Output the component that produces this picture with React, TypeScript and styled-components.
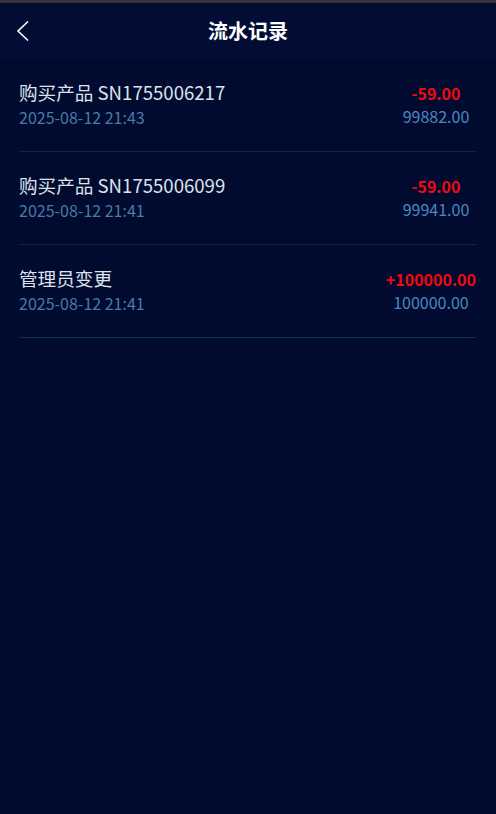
import React from "react";
import styled, { createGlobalStyle } from "styled-components";

const Global = createGlobalStyle`
  html, body { margin: 0; padding: 0; background: #000b2f; }
  body { font-family: "Noto Sans CJK SC", "Noto Sans", sans-serif; }
`;

const Page = styled.div`
  min-height: 814px;
  background: #000b2f;
  border-top: 3px solid #363636;
  box-sizing: border-box;
`;

const Header = styled.header`
  height: 56px;
  background: #020d36;
  display: grid;
  grid-template-columns: 60px 1fr 60px;
  align-items: center;
`;

const Back = styled.button`
  background: none;
  border: none;
  padding: 0 0 0 16px;
  display: flex;
  align-items: center;
  height: 100%;
  cursor: pointer;
`;

const Title = styled.h1`
  margin: 0;
  text-align: center;
  color: #ffffff;
  font-size: 20px;
  font-weight: 700;
  line-height: 28px;
`;

const List = styled.ul`
  list-style: none;
  margin: 0;
  padding: 0 20px 0 19px;
`;

const Row = styled.li<{ $teal?: boolean }>`
  display: flex;
  align-items: center;
  justify-content: space-between;
  padding: 20px 0 21px;
  border-bottom: 1px solid ${(p) => (p.$teal ? "#0c3447" : "#17253f")};
`;

const Left = styled.div`
  display: flex;
  flex-direction: column;
`;

const Name = styled.div`
  color: #dde2ec;
  font-size: 18.6px;
  line-height: 26px;
`;

const Time = styled.div`
  color: #4a7aa9;
  font-size: 16px;
  line-height: 25px;
`;

const Right = styled.div`
  min-width: 80px;
  display: flex;
  flex-direction: column;
  align-items: center;
`;

const Amount = styled.div`
  color: #f00a10;
  font-size: 16px;
  font-weight: 700;
  line-height: 23px;
`;

const Balance = styled.div`
  color: #4c87c2;
  font-size: 16px;
  line-height: 23px;
`;

const records = [
  { name: "购买产品 SN1755006217", time: "2025-08-12 21:43", amount: "-59.00", balance: "99882.00" },
  { name: "购买产品 SN1755006099", time: "2025-08-12 21:41", amount: "-59.00", balance: "99941.00" },
  { name: "管理员变更", time: "2025-08-12 21:41", amount: "+100000.00", balance: "100000.00" },
];

export default function App() {
  return (
    <>
      <Global />
      <Page>
        <Header>
          <Back aria-label="返回">
            <svg width="14" height="22" viewBox="0 0 14 22">
              <polyline points="12,1.5 2,11 12,20.5" fill="none" stroke="#ffffff" strokeWidth="1.6" />
            </svg>
          </Back>
          <Title>流水记录</Title>
          <span />
        </Header>
        <List>
          {records.map((r, i) => (
            <Row key={i} $teal={i === records.length - 1}>
              <Left>
                <Name>{r.name}</Name>
                <Time>{r.time}</Time>
              </Left>
              <Right>
                <Amount>{r.amount}</Amount>
                <Balance>{r.balance}</Balance>
              </Right>
            </Row>
          ))}
        </List>
      </Page>
    </>
  );
}
